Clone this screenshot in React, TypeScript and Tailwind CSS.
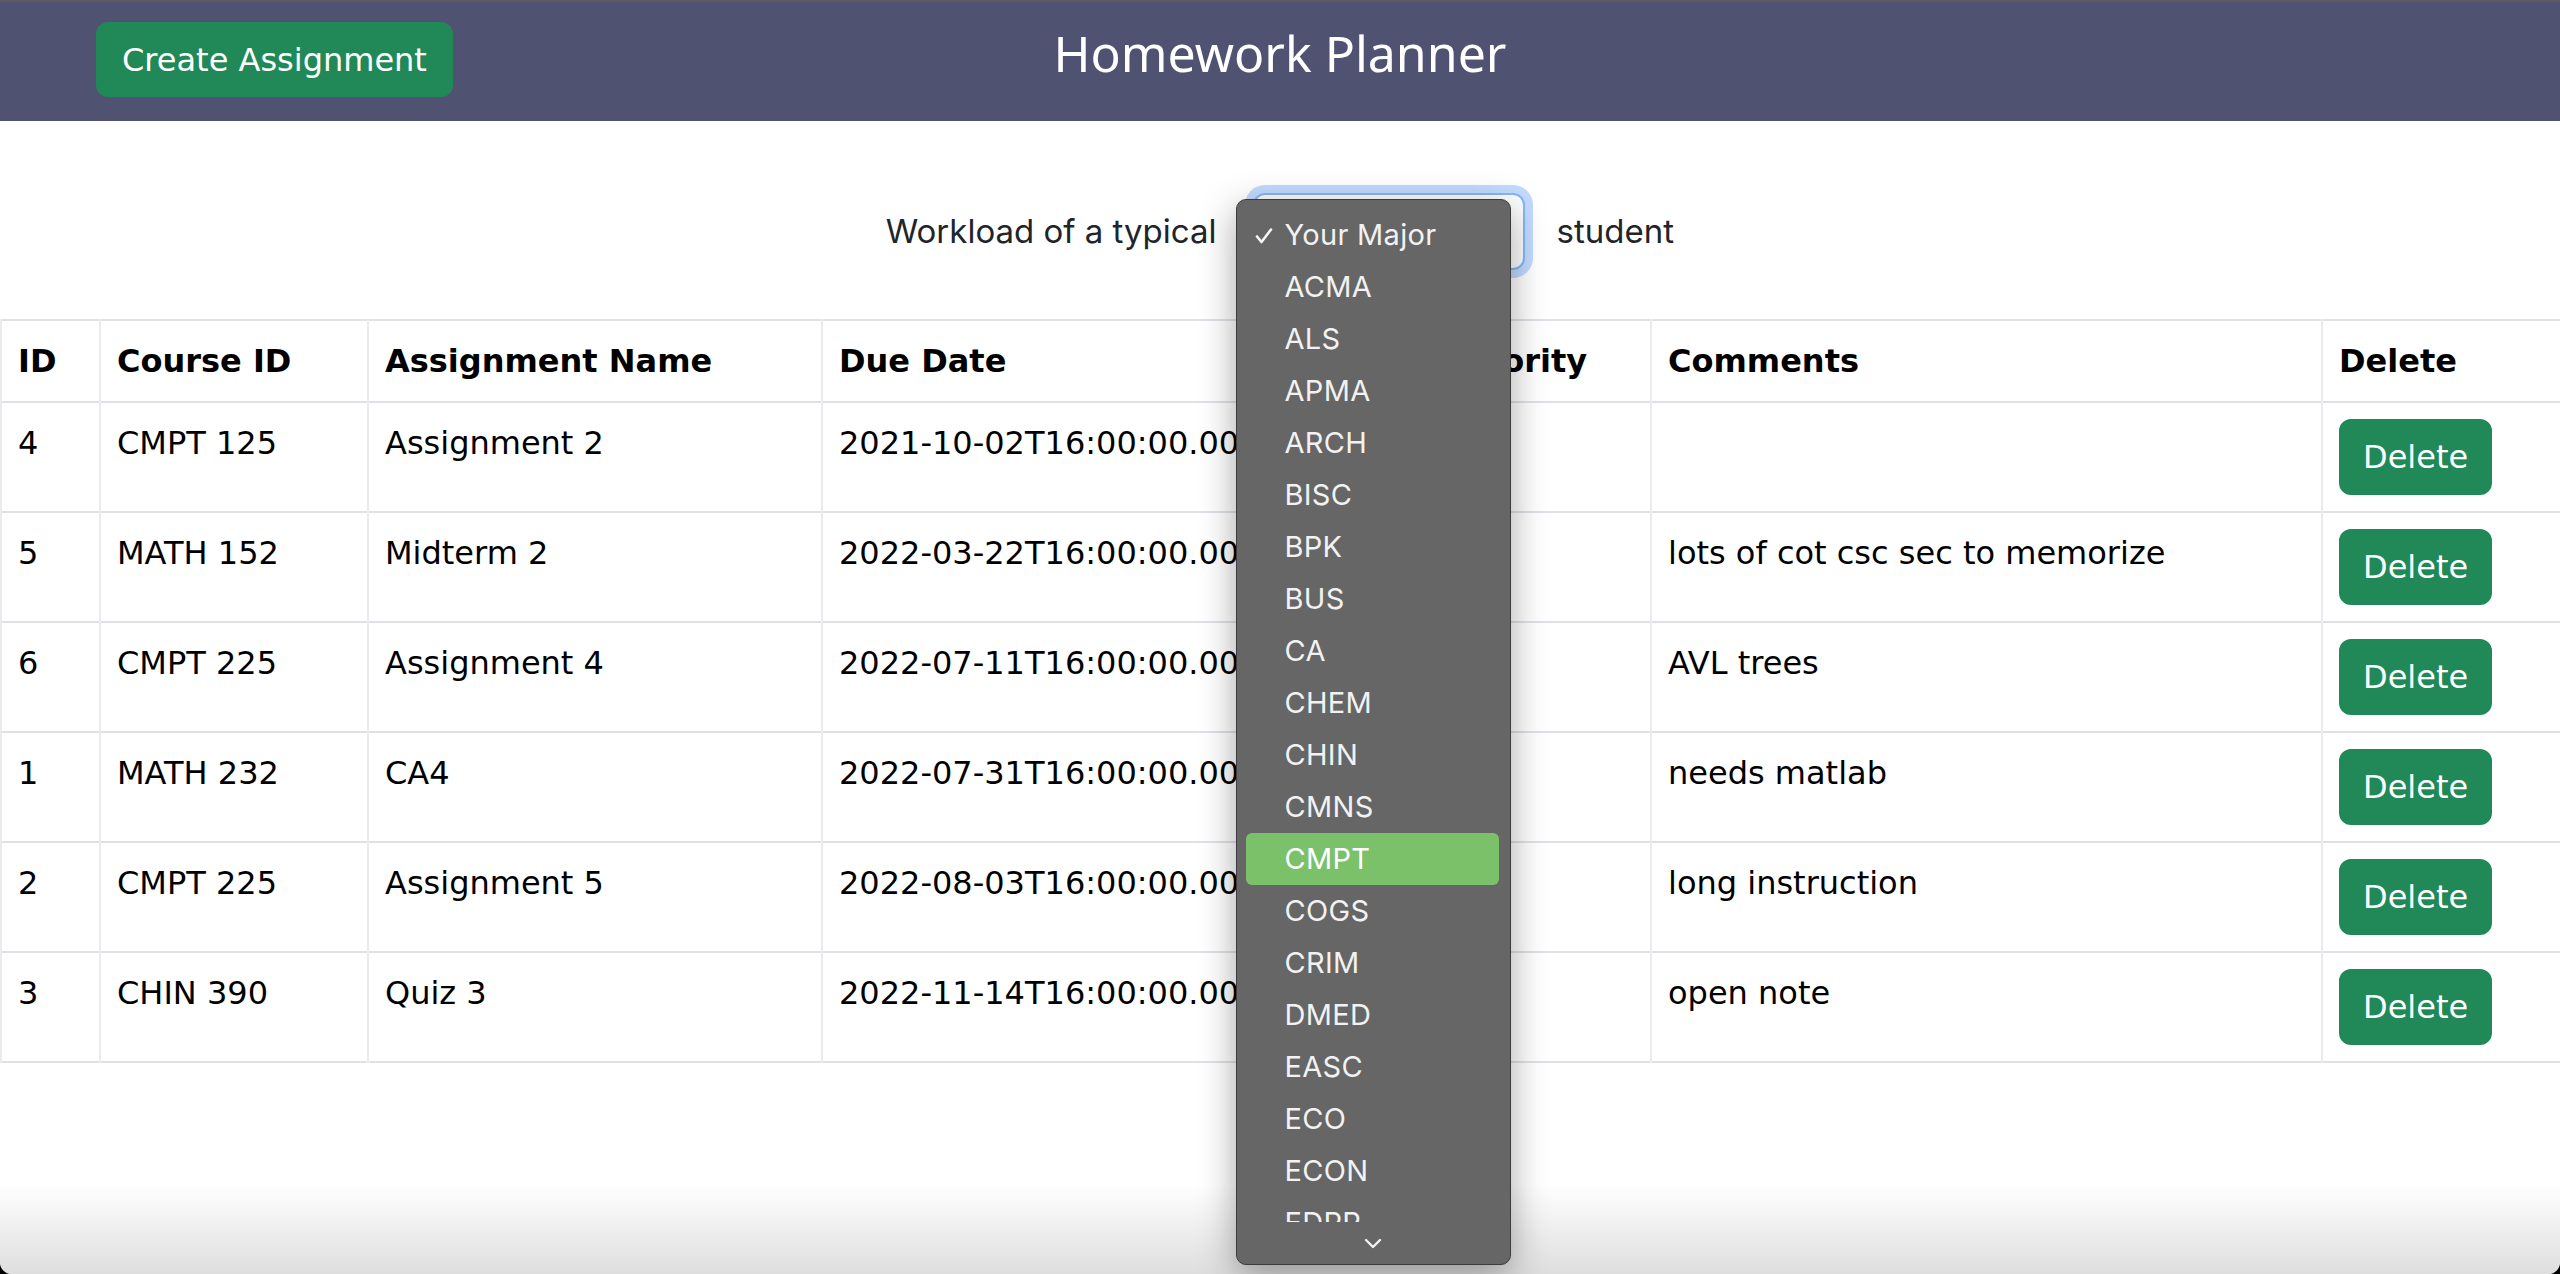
import React from "react";

const rows = [
  { id: "4", course: "CMPT 125", name: "Assignment 2", due: "2021-10-02T16:00:00.000Z", pr: "3", comment: "" },
  { id: "5", course: "MATH 152", name: "Midterm 2", due: "2022-03-22T16:00:00.000Z", pr: "2", comment: "lots of cot csc sec to memorize" },
  { id: "6", course: "CMPT 225", name: "Assignment 4", due: "2022-07-11T16:00:00.000Z", pr: "1", comment: "AVL trees" },
  { id: "1", course: "MATH 232", name: "CA4", due: "2022-07-31T16:00:00.000Z", pr: "2", comment: "needs matlab" },
  { id: "2", course: "CMPT 225", name: "Assignment 5", due: "2022-08-03T16:00:00.000Z", pr: "1", comment: "long instruction" },
  { id: "3", course: "CHIN 390", name: "Quiz 3", due: "2022-11-14T16:00:00.000Z", pr: "3", comment: "open note" },
];

const majors = [
  "ACMA", "ALS", "APMA", "ARCH", "BISC", "BPK", "BUS", "CA", "CHEM", "CHIN", "CMNS", "CMPT",
  "COGS", "CRIM", "DMED", "EASC", "ECO", "ECON", "EDPP", "ENSC", "ENV", "FPA",
];

const headers = ["ID", "Course ID", "Assignment Name", "Due Date", "Priority", "Comments", "Delete"];
const widths = [99, 268, 454, 613, 216, 671, 239];

function Menu() {
  return (
    <div className="absolute left-[-19px] top-[4px] w-[275px] h-[1066px] rounded-[10px] border border-[#3c3c3c] bg-[#666666] shadow-[0_10px_36px_rgba(0,0,0,0.35)] flex flex-col z-20 font-['Inter',sans-serif] text-[29px] tracking-[0.3px] text-[#f2f2f2]">
      <div className="h-[1022px] overflow-hidden pt-[9px] shrink-0">
        <div className="relative ml-[9px] mr-[11px] h-[52px] leading-[52px] pl-[39px] whitespace-nowrap">
          <svg className="absolute left-[9px] top-[19px]" width="18" height="16" viewBox="0 0 18 16" fill="none">
            <path d="M2 8.5 L6.5 14 L16 1.5" stroke="#f5f5f5" strokeWidth="2.6" strokeLinecap="round" strokeLinejoin="round" />
          </svg>
          Your Major
        </div>
        {majors.map((m) => (
          <div
            key={m}
            className={
              m === "CMPT"
                ? "ml-[9px] mr-[11px] h-[52px] leading-[52px] pl-[39px] rounded-[6px] bg-[#7ac16a] text-white"
                : "ml-[9px] mr-[11px] h-[52px] leading-[52px] pl-[39px]"
            }
          >
            {m}
          </div>
        ))}
      </div>
      <div className="flex-1 flex items-center justify-center">
        <svg width="18" height="11" viewBox="0 0 18 11" fill="none">
          <path d="M2 2 L9 9 L16 2" stroke="#f2f2f2" strokeWidth="2.4" strokeLinecap="round" strokeLinejoin="round" />
        </svg>
      </div>
    </div>
  );
}

export default function App() {
  return (
    <div className="w-[2560px] h-[1274px] bg-black">
      <div className="relative w-[2560px] h-[1274px] overflow-hidden bg-white rounded-b-[12px]">
        <header className="h-[121px] bg-[#4f5371] border-t-2 border-[#5c5c60] grid grid-cols-[1fr_auto_1fr] items-start">
          <div className="pl-[96px] pt-[20px]">
            <button className="h-[75px] px-[24px] rounded-[12px] bg-[#208957] border-2 border-[#208957] text-white text-[32px] leading-[48px] font-['DejaVu_Sans',Verdana,sans-serif] whitespace-nowrap">
              Create Assignment
            </button>
          </div>
          <h1 className="mt-[26px] text-white text-[50px] leading-[51px] font-normal font-['Noto_Sans',sans-serif] whitespace-nowrap">
            Homework Planner
          </h1>
          <div />
        </header>

        <div className="mt-[72px] flex items-center justify-center h-[77px] font-['Inter',sans-serif] text-[33px] text-[#212529]">
          <span className="w-[333px] text-right whitespace-nowrap">Workload of a typical</span>
          <div className="relative ml-[36px] w-[272px] h-[77px] rounded-[12px] border-2 border-[#86b7fe] bg-white shadow-[0_0_0_8px_rgba(13,110,253,0.25)]">
            <Menu />
          </div>
          <span className="ml-[32px] w-[120px] whitespace-nowrap">student</span>
        </div>

        <table className="mt-[49px] w-[2560px] table-fixed border-collapse font-['DejaVu_Sans',Verdana,sans-serif] text-[32px] leading-[48px] text-black">
          <colgroup>
            {widths.map((w, i) => (
              <col key={i} style={{ width: w }} />
            ))}
          </colgroup>
          <thead>
            <tr className="border-y-2 border-[#dee2e6]">
              {headers.map((h) => (
                <th key={h} className="border-x-2 border-x-[#e9ebee] px-[16px] py-[16px] text-left font-bold align-top whitespace-nowrap">
                  {h}
                </th>
              ))}
            </tr>
          </thead>
          <tbody>
            {rows.map((r) => (
              <tr key={r.id} className="border-b-2 border-[#dee2e6]">
                <td className="border-x-2 border-x-[#e9ebee] p-[16px] align-top whitespace-nowrap">{r.id}</td>
                <td className="border-x-2 border-x-[#e9ebee] p-[16px] align-top whitespace-nowrap">{r.course}</td>
                <td className="border-x-2 border-x-[#e9ebee] p-[16px] align-top whitespace-nowrap">{r.name}</td>
                <td className="border-x-2 border-x-[#e9ebee] p-[16px] align-top whitespace-nowrap overflow-hidden">{r.due}</td>
                <td className="border-x-2 border-x-[#e9ebee] p-[16px] align-top whitespace-nowrap">{r.pr}</td>
                <td className="border-x-2 border-x-[#e9ebee] p-[16px] align-top whitespace-nowrap">{r.comment}</td>
                <td className="border-x-2 border-x-[#e9ebee] p-[16px] align-top">
                  <button className="h-[76px] px-[22px] rounded-[12px] bg-[#208957] border-2 border-[#208957] text-white text-[32px] leading-[48px]">
                    Delete
                  </button>
                </td>
              </tr>
            ))}
          </tbody>
        </table>

        <div className="pointer-events-none absolute bottom-0 left-0 w-full h-[90px] bg-gradient-to-b from-[rgba(220,220,220,0)] to-[#dedede]" />
      </div>
    </div>
  );
}
